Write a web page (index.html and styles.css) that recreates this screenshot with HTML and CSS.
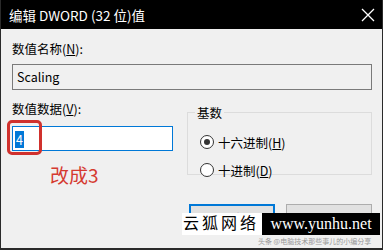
FILE: index.html
```html
<!DOCTYPE html>
<html lang="zh-CN">
<head>
    <meta charset="UTF-8">
    <title>编辑 DWORD (32 位)值</title>
    <link rel="stylesheet" href="styles.css">
</head>
<body>
    <div class="window">
        <div class="titlebar">
            <span class="title">编辑 DWORD (32 位)值</span>
            <svg class="close" width="14" height="14" viewBox="0 0 14 14">
                <path d="M1 1 L13 13 M13 1 L1 13" stroke="#fff" stroke-width="1.3" fill="none"/>
            </svg>
        </div>

        <div class="content">
            <label class="field-label">数值名称(<u>N</u>):</label>
            <div class="textbox readonly">Scaling</div>

            <div class="row">
                <div class="data-col">
                    <label class="field-label">数值数据(<u>V</u>):</label>
                    <div class="textbox focused"><span class="selected">4</span></div>
                    <div class="note">改成3</div>
                    <!-- red mark drawn over the value box -->
                    <div class="mark"></div>
                </div>

                <fieldset class="base">
                    <legend>基数</legend>
                    <div class="radio checked"><span class="dot"></span><span>十六进制(<u>H</u>)</span></div>
                    <div class="radio"><span class="dot"></span><span>十进制(<u>D</u>)</span></div>
                </fieldset>
            </div>

            <div class="buttons">
                <button class="btn default">确定</button>
                <button class="btn">取消</button>
            </div>
        </div>

        <div class="watermark">
            <span class="wm-cn">云狐网络</span><span class="wm-en">www.yunhu.net</span>
        </div>
        <div class="credit">头条 @电脑技术那些事儿的小编分享</div>
    </div>
</body>
</html>
```

FILE: styles.css
```css
body {
    margin: 0;
    font-family: "Noto Sans CJK SC", "Noto Sans", sans-serif;
    color: #000;
}
.window {
    position: relative;
    width: 383px;
    height: 250px;
    box-sizing: border-box;
    background: #f0f0f0;
    border-left: 1px solid #2a2a2a;
    border-right: 1px solid #2a2a2a;
    border-bottom: 2px solid #2a2a2a;
    overflow: hidden;
}
.titlebar {
    height: 29px;
    background: #000;
    color: #fff;
    display: flex;
    align-items: center;
    justify-content: space-between;
    padding: 0 7px 0 8px;
}
.title {
    font-size: 13.5px;
}
.close {
    margin-top: 1px;
}
.content {
    padding: 12px 10px 0 11px;
}
.field-label {
    display: block;
    font-size: 12.5px;
    line-height: 16px;
}
.textbox {
    box-sizing: border-box;
    font-size: 12.5px;
    border: 1px solid #7a7a7a;
    padding: 0 4px;
}
.readonly {
    margin-top: 7px;
    height: 26px;
    line-height: 23px;
    background: #f0f0f0;
}
.row {
    display: flex;
    gap: 14px;
    margin-top: 11px;
}
.data-col {
    position: relative;
    width: 161px;
}
.focused {
    margin-top: 9px;
    height: 25px;
    background: #fff;
    border-color: #0078d7;
    padding: 3px 2px;
}
.selected {
    display: inline-block;
    background: #0078d7;
    color: #fff;
    line-height: 17px;
    padding: 0 1px;
}
.mark {
    position: absolute;
    left: -5px;
    top: 19px;
    width: 29px;
    height: 29px;
    border: 3px solid #d0312d;
    border-radius: 5px;
}
.note {
    color: #d53a30;
    font-size: 19px;
    line-height: 24px;
    margin: 12px 0 0 38px;
}
.base {
    flex: 1;
    margin: 2px 0 0 0;
    padding: 6px 0 0 12px;
    height: 72px;
    box-sizing: border-box;
    border: 1px solid #dcdcdc;
}
.base legend {
    font-size: 12.5px;
    padding: 0 2px;
    margin-left: -5px;
}
.radio {
    display: flex;
    align-items: center;
    gap: 4px;
    font-size: 12.5px;
    height: 28px;
}
.dot {
    width: 12px;
    height: 12px;
    border: 1px solid #333;
    border-radius: 50%;
    background: #fff;
    display: flex;
    align-items: center;
    justify-content: center;
}
.checked .dot::after {
    content: "";
    width: 6px;
    height: 6px;
    border-radius: 50%;
    background: #333;
}
.buttons {
    display: flex;
    justify-content: flex-end;
    gap: 11px;
    margin-top: 17px;
}
.btn {
    width: 86px;
    height: 29px;
    font-family: inherit;
    font-size: 12.5px;
    background: #e1e1e1;
    border: 1px solid #adadad;
}
.btn.default {
    border: 2px solid #0078d7;
}
.watermark {
    position: absolute;
    left: 181px;
    top: 213px;
    display: flex;
    height: 22px;
    font-family: "Liberation Serif", "Noto Sans CJK SC", serif;
}
.wm-cn {
    background: #fff;
    width: 80px;
    font-size: 16px;
    line-height: 22px;
    letter-spacing: 3px;
    padding-left: 1px;
    box-sizing: border-box;
}
.wm-en {
    background: #000;
    color: #fff;
    width: 118px;
    font-size: 16px;
    line-height: 22px;
    text-align: center;
}
.credit {
    position: absolute;
    left: 257px;
    top: 236px;
    font-size: 7px;
    color: #999;
}
```
